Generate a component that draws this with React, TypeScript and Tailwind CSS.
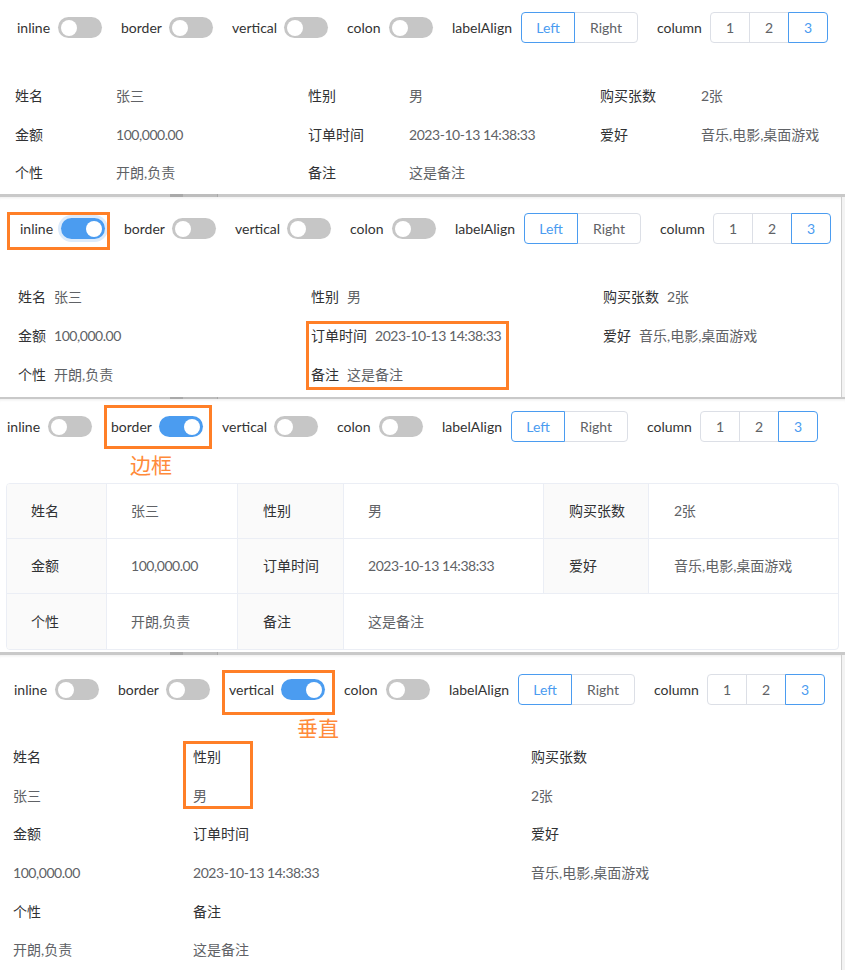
import React from "react";

const FONT = "font-['Lato','Noto_Sans_CJK_SC',sans-serif]";
const LABEL = "text-[#303133]";
const VALUE = "text-[#606266]";

type Item = { label: string; value: string };
const ITEMS: Item[] = [
  { label: "姓名", value: "张三" },
  { label: "性别", value: "男" },
  { label: "购买张数", value: "2张" },
  { label: "金额", value: "100,000.00" },
  { label: "订单时间", value: "2023-10-13 14:38:33" },
  { label: "爱好", value: "音乐,电影,桌面游戏" },
  { label: "个性", value: "开朗,负责" },
  { label: "备注", value: "这是备注" },
];

const vcls = (v: string) => (/\d/.test(v) ? `${VALUE} tracking-[-0.45px]` : VALUE);

function Switch({ on, glow }: { on?: boolean; glow?: boolean }) {
  return (
    <span
      className={`inline-flex h-[21px] w-[44px] shrink-0 items-center rounded-full px-[3px] ${
        on ? "justify-end bg-[#4b9cf0]" : "justify-start bg-[#c6c6c6]"
      } ${glow ? "ring-[3px] ring-[#dcebfc]" : ""}`}
    >
      <span className="h-[16px] w-[16px] rounded-full bg-white" />
    </span>
  );
}

function Seg({ items, widths, active }: { items: string[]; widths: string[]; active: number }) {
  return (
    <div className="flex h-[31px]">
      {items.map((t, i) => {
        const first = i === 0;
        const last = i === items.length - 1;
        const isActive = i === active;
        return (
          <div
            key={t}
            className={`relative flex h-full items-center justify-center border text-[14px] ${widths[i]} ${
              first ? "rounded-l-[4px]" : "-ml-px"
            } ${last ? "rounded-r-[4px]" : ""} ${
              isActive ? "z-10 border-[#4b9cf0] text-[#4b9cf0]" : "border-[#dcdfe6] text-[#606266]"
            }`}
          >
            {t}
          </div>
        );
      })}
    </div>
  );
}

function Toolbar({ on, glow }: { on?: string; glow?: boolean }) {
  const sw = [
    { k: "inline", w: "w-[41px]" },
    { k: "border", w: "w-[48px]" },
    { k: "vertical", w: "w-[52px]" },
    { k: "colon", w: "w-[42px]" },
  ];
  return (
    <div className="flex h-[31px] items-center gap-[19px] text-[14px] leading-none text-[#333]">
      {sw.map((s) => (
        <div key={s.k} className="flex items-center">
          <span className={s.w}>{s.k}</span>
          <Switch on={on === s.k} glow={glow && on === s.k} />
        </div>
      ))}
      <div className="flex items-center">
        <span className="w-[69px]">labelAlign</span>
        <Seg items={["Left", "Right"]} widths={["w-[54px]", "w-[64px]"]} active={0} />
      </div>
      <div className="flex items-center">
        <span className="w-[53px]">column</span>
        <Seg items={["1", "2", "3"]} widths={["w-[40px]", "w-[40px]", "w-[40px]"]} active={2} />
      </div>
    </div>
  );
}

function Band({ h }: { h: string }) {
  return (
    <div className={`flex w-full bg-[#c9c9c9] ${h}`}>
      <div className="w-[170px]" />
      <div className="w-[13px] bg-[#a9a9a9]" />
      <div className="w-[34px] bg-[#bdbdbd]" />
      <div className="w-px bg-[#a9a9a9]" />
    </div>
  );
}

const Box = ({ cls }: { cls: string }) => (
  <div className={`pointer-events-none absolute border-[3px] border-[#ff7f27] ${cls}`} />
);

function Panel1() {
  return (
    <div className="h-[194px] bg-white pt-[12px]">
      <div className="pl-[17px]">
        <Toolbar />
      </div>
      <div className="mt-[34px] grid grid-cols-[293px_292px_1fr] pl-[15px] text-[14px] leading-none">
        {ITEMS.map((it) => (
          <div key={it.label} className="flex h-[38.5px] items-center">
            <span className={`w-[101px] shrink-0 ${LABEL}`}>{it.label}</span>
            <span className={vcls(it.value)}>{it.value}</span>
          </div>
        ))}
      </div>
    </div>
  );
}

function Panel2() {
  return (
    <div className="relative h-[200px] w-[842px] border-r border-[#cfcfcf] bg-white pt-[16px] shadow-[inset_0_3px_3px_-2px_rgba(0,0,0,0.08)]">
      <div className="pl-[20px]">
        <Toolbar on="inline" glow />
      </div>
      <div className="mt-[33.5px] grid grid-cols-[293px_292px_1fr] pl-[18px] text-[14px] leading-none">
        {ITEMS.map((it) => (
          <div key={it.label} className="flex h-[39px] items-center gap-[8px]">
            <span className={LABEL}>{it.label}</span>
            <span className={vcls(it.value)}>{it.value}</span>
          </div>
        ))}
      </div>
      <Box cls="left-[7px] top-[15px] h-[38px] w-[103px]" />
      <Box cls="left-[306px] top-[124px] h-[69px] w-[203px]" />
    </div>
  );
}

function Panel3() {
  const rows: [Item, Item, Item | null][] = [
    [ITEMS[0], ITEMS[1], ITEMS[2]],
    [ITEMS[3], ITEMS[4], ITEMS[5]],
    [ITEMS[6], ITEMS[7], null],
  ];
  return (
    <div className="relative h-[253px] bg-white pt-[12px] shadow-[inset_0_3px_3px_-2px_rgba(0,0,0,0.08)]">
      <div className="pl-[7px]">
        <Toolbar on="border" />
      </div>
      <div className="ml-[6px] mt-[41px] w-[833px] overflow-hidden rounded-[4px] border border-[#ebeef5] text-[14px] leading-none">
        {rows.map((r, ri) => (
          <div
            key={ri}
            className={`grid h-[55px] grid-cols-[100px_131px_106px_200px_105px_1fr] ${
              ri < 2 ? "border-b border-[#ebeef5]" : ""
            }`}
          >
            <div className={`flex items-center border-r border-[#ebeef5] bg-[#fafafa] pl-[24px] ${LABEL}`}>{r[0].label}</div>
            <div className={`flex items-center border-r border-[#ebeef5] pl-[24px] ${vcls(r[0].value)}`}>{r[0].value}</div>
            <div className={`flex items-center border-r border-[#ebeef5] bg-[#fafafa] pl-[25px] ${LABEL}`}>{r[1].label}</div>
            {r[2] ? (
              <>
                <div className={`flex items-center border-r border-[#ebeef5] pl-[24px] ${vcls(r[1].value)}`}>{r[1].value}</div>
                <div className={`flex items-center border-r border-[#ebeef5] bg-[#fafafa] pl-[25px] ${LABEL}`}>{r[2].label}</div>
                <div className={`flex items-center pl-[25px] ${vcls(r[2].value)}`}>{r[2].value}</div>
              </>
            ) : (
              <div className={`col-span-3 flex items-center pl-[24px] ${VALUE}`}>{r[1].value}</div>
            )}
          </div>
        ))}
      </div>
      <Box cls="left-[104px] top-[6px] h-[44px] w-[108px]" />
      <div className="absolute left-[130px] top-[55px] text-[21px] leading-none text-[#ff8a3a]">边框</div>
    </div>
  );
}

function Panel4() {
  return (
    <div className="relative h-[315px] w-[842px] border-r border-[#cfcfcf] bg-white pt-[19px] shadow-[inset_0_3px_3px_-2px_rgba(0,0,0,0.08)]">
      <div className="pl-[14px]">
        <Toolbar on="vertical" />
      </div>
      <div className="mt-[33px] grid grid-cols-[180px_338px_1fr] pl-[13px] text-[14px] leading-none">
        {ITEMS.map((it) => (
          <div key={it.label} className="flex flex-col">
            <div className={`flex h-[38.6px] items-center ${LABEL}`}>{it.label}</div>
            <div className={`flex h-[38.6px] items-center ${vcls(it.value)}`}>{it.value}</div>
          </div>
        ))}
      </div>
      <Box cls="left-[222px] top-[15px] h-[45px] w-[113px]" />
      <Box cls="left-[183px] top-[86px] h-[68px] w-[70px]" />
      <div className="absolute left-[297px] top-[62px] text-[21px] leading-none text-[#ff8a3a]">垂直</div>
    </div>
  );
}

export default function App() {
  return (
    <div className={`h-[970px] w-[845px] overflow-hidden bg-[#f3f3f3] ${FONT}`}>
      <Panel1 />
      <Band h="h-[3px]" />
      <Panel2 />
      <Band h="h-[2px]" />
      <Panel3 />
      <Band h="h-[3px]" />
      <Panel4 />
    </div>
  );
}
